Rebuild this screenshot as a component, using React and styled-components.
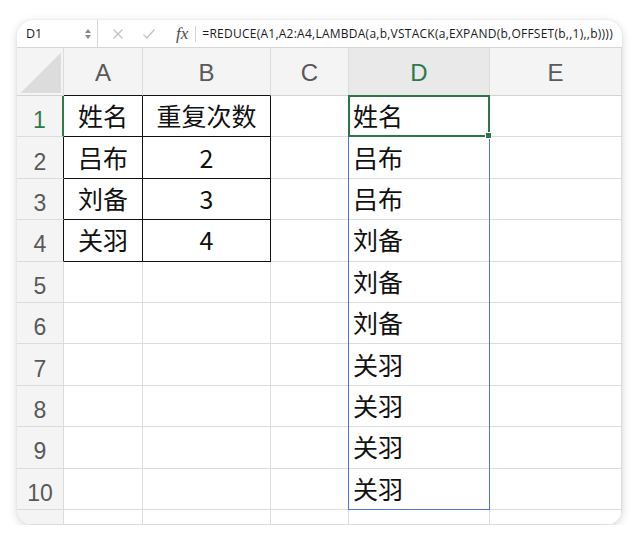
import { Fragment } from 'react';
import styled, { createGlobalStyle } from 'styled-components';

const GlobalStyle = createGlobalStyle`
  html, body {
    margin: 0;
    padding: 0;
    background: #ffffff;
  }
`;

const Page = styled.div`
  padding: 20px 18px 0 17px;
`;

const Window = styled.div`
  width: 605px;
  height: 505px;
  border-radius: 16px;
  overflow: hidden;
  background: #ffffff;
  box-shadow: 0 2px 10px rgba(0, 0, 0, 0.16), 0 0 2px rgba(0, 0, 0, 0.08);
  display: flex;
  flex-direction: column;
`;

const FormulaBar = styled.div`
  display: flex;
  align-items: center;
  height: 27px;
  flex-shrink: 0;
  border-bottom: 1px solid #d6d6d6;
  font-family: "Open Sans", "Noto Sans", sans-serif;
  font-size: 12px;
  color: #1a1a1a;
`;

const NameBox = styled.div`
  width: 81px;
  height: 100%;
  flex-shrink: 0;
  box-sizing: border-box;
  display: flex;
  align-items: center;
  justify-content: space-between;
  padding: 0 6px 0 9px;
  border-right: 1px solid #d6d6d6;
  font-size: 12.5px;
`;

const Stepper = styled.div`
  display: flex;
  flex-direction: column;
  gap: 2px;
`;

const Arrow = styled.span`
  width: 0;
  height: 0;
  border-left: 3px solid transparent;
  border-right: 3px solid transparent;
  ${(p) => (p.$down ? 'border-top: 4px solid #8a8a8a;' : 'border-bottom: 4px solid #8a8a8a;')}
`;

const Actions = styled.div`
  display: flex;
  align-items: center;
  flex-shrink: 0;
  gap: 18px;
  padding-left: 14px;
  height: 100%;
`;

const Fx = styled.span`
  font-family: "Liberation Serif", serif;
  font-style: italic;
  font-size: 17px;
  color: #4a4a4a;
  padding-right: 7px;
  border-right: 1px solid #d6d6d6;
  line-height: 16px;
  margin-left: 2px;
`;

const Formula = styled.div`
  padding-left: 6px;
  white-space: nowrap;
  overflow: hidden;
  letter-spacing: 0.25px;
`;

const Sheet = styled.div`
  flex: 1;
  display: grid;
  grid-template-columns: 47px 79px 128px 78px 141px 132px;
  grid-template-rows: 48px repeat(10, 41.4px) 1fr;
  font-family: "Noto Sans CJK SC", "Noto Sans", sans-serif;
`;

const Corner = styled.div`
  grid-row: 1;
  grid-column: 1;
  background: #f4f4f4;
  border-right: 1px solid #dcdcdc;
  border-bottom: 1px solid #d2d2d2;
  position: relative;
  &::after {
    content: "";
    position: absolute;
    right: 2px;
    bottom: 2px;
    width: 41px;
    height: 40px;
    background: linear-gradient(to bottom right, transparent 50%, #dcdcdc 50%);
  }
`;

const ColHead = styled.div`
  grid-row: 1;
  grid-column: ${(p) => p.$col};
  background: ${(p) => (p.$active ? '#e9e9e9' : '#f4f4f4')};
  color: ${(p) => (p.$active ? '#2d7a4a' : '#595959')};
  border-right: 1px solid #dcdcdc;
  border-bottom: 1px solid ${(p) => (p.$boxed ? '#111111' : '#d2d2d2')};
  display: flex;
  align-items: center;
  justify-content: center;
  padding-top: 3px;
  box-sizing: border-box;
  font-family: "Liberation Sans", sans-serif;
  font-size: 24px;
  font-weight: 300;
`;

const RowHead = styled.div`
  grid-row: ${(p) => p.$row};
  grid-column: 1;
  background: #f4f4f4;
  color: ${(p) => (p.$active ? '#2d7a4a' : '#595959')};
  border-right: ${(p) =>
    p.$active ? '2px solid #2d7a4a' : `1px solid ${p.$boxed ? '#111111' : '#dcdcdc'}`};
  border-bottom: 1px solid #dcdcdc;
  display: flex;
  align-items: center;
  justify-content: center;
  padding-top: 9px;
  box-sizing: border-box;
  font-family: "Liberation Sans", sans-serif;
  font-size: 23px;
`;

const Cell = styled.div`
  grid-row: ${(p) => p.$row};
  grid-column: ${(p) => p.$col};
  border-right: 1px solid ${(p) => (p.$boxed ? '#111111' : '#dcdcdc')};
  border-bottom: 1px solid ${(p) => (p.$boxed ? '#111111' : '#dcdcdc')};
  display: flex;
  align-items: center;
  justify-content: ${(p) => (p.$center ? 'center' : 'flex-start')};
  padding: 0 0 2px ${(p) => (p.$center ? '0' : '4px')};
  box-sizing: border-box;
  font-size: 25px;
  color: #111111;
  min-width: 0;
`;

const Spill = styled.div`
  grid-column: 5;
  grid-row: 2 / 12;
  border: 1px solid #4a78d6;
  margin: -1px 0 0 -1px;
  pointer-events: none;
  z-index: 1;
`;

const Selection = styled.div`
  grid-column: 5;
  grid-row: 2;
  border: 2px solid #2f7446;
  margin: -1px 0 0 -1px;
  position: relative;
  pointer-events: none;
  z-index: 2;
`;

const Handle = styled.span`
  position: absolute;
  right: -4px;
  bottom: -4px;
  width: 5px;
  height: 5px;
  background: #2f7446;
  border: 1px solid #ffffff;
`;

const Cross = () => (
  <svg width="12" height="12" viewBox="0 0 12 12">
    <path d="M1.5 1.5 L10.5 10.5 M10.5 1.5 L1.5 10.5" stroke="#c4c4c4" strokeWidth="1.4" fill="none" />
  </svg>
);

const Check = () => (
  <svg width="14" height="12" viewBox="0 0 14 12">
    <path d="M1.5 6.5 L5 10 L12.5 1.5" stroke="#c4c4c4" strokeWidth="1.4" fill="none" />
  </svg>
);

const cols = ['A', 'B', 'C', 'D', 'E'];

const tableA = ['姓名', '吕布', '刘备', '关羽'];
const tableB = ['重复次数', '2', '3', '4'];
const spill = ['姓名', '吕布', '吕布', '刘备', '刘备', '刘备', '关羽', '关羽', '关羽', '关羽'];

export default function App() {
  const rows = Array.from({ length: 11 }, (_, i) => i);

  return (
    <>
      <GlobalStyle />
      <Page>
        <Window>
          <FormulaBar>
            <NameBox>
              <span>D1</span>
              <Stepper>
                <Arrow />
                <Arrow $down />
              </Stepper>
            </NameBox>
            <Actions>
              <Cross />
              <Check />
              <Fx>fx</Fx>
            </Actions>
            <Formula>=REDUCE(A1,A2:A4,LAMBDA(a,b,VSTACK(a,EXPAND(b,OFFSET(b,,1),,b))))</Formula>
          </FormulaBar>

          <Sheet>
            <Corner />
            {cols.map((c, i) => (
              <ColHead key={c} $col={i + 2} $active={c === 'D'} $boxed={i < 2}>
                {c}
              </ColHead>
            ))}

            {rows.map((r) => {
              const row = r + 2;
              const inTable = r < 4;
              return (
                <Fragment key={r}>
                  <RowHead $row={row} $active={r === 0} $boxed={r > 0 && r < 4}>
                    {r < 10 ? r + 1 : ''}
                  </RowHead>
                  <Cell $row={row} $col={2} $boxed={inTable} $center>
                    {inTable ? tableA[r] : ''}
                  </Cell>
                  <Cell $row={row} $col={3} $boxed={inTable} $center>
                    {inTable ? tableB[r] : ''}
                  </Cell>
                  <Cell $row={row} $col={4} />
                  <Cell $row={row} $col={5}>{spill[r] || ''}</Cell>
                  <Cell $row={row} $col={6} />
                </Fragment>
              );
            })}

            <Spill />
            <Selection>
              <Handle />
            </Selection>
          </Sheet>
        </Window>
      </Page>
    </>
  );
}
